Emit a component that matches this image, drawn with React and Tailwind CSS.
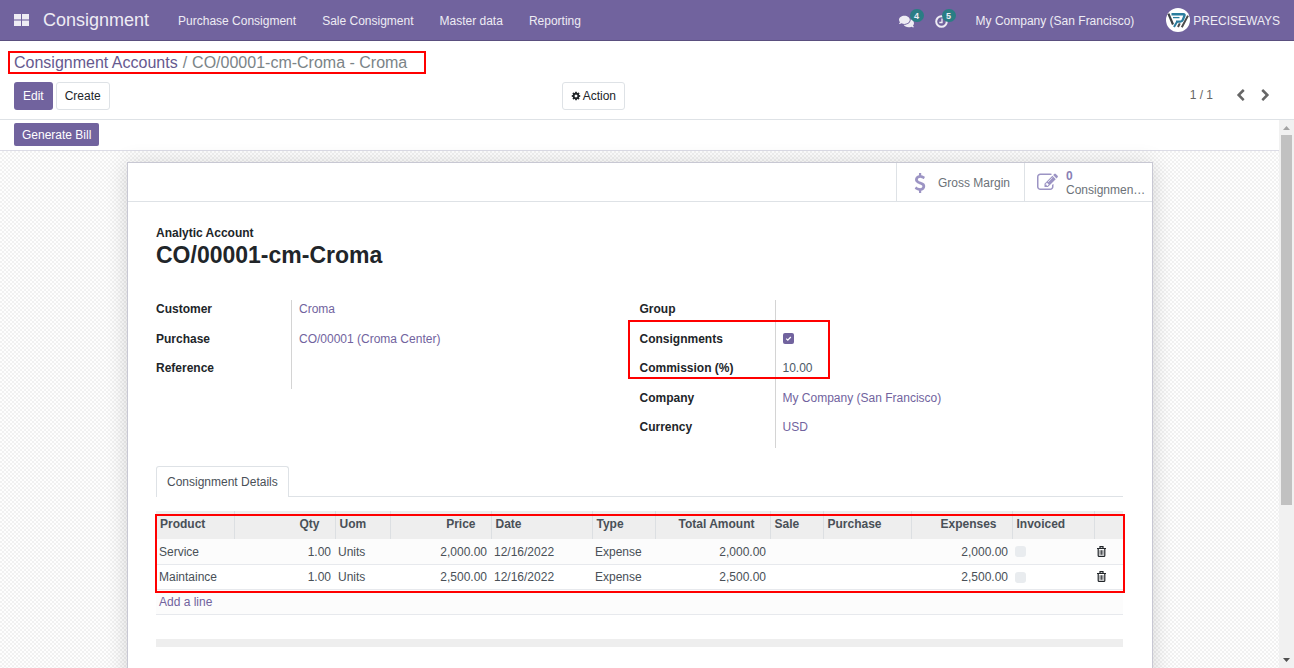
import React from "react";
import { FaComments } from "react-icons/fa";

const MENUS = ["Purchase Consigment", "Sale Consigment", "Master data", "Reporting"];

const LEFT_FIELDS = [
  { label: "Customer", link: "Croma" },
  { label: "Purchase", link: "CO/00001 (Croma Center)" },
  { label: "Reference" },
];

const RIGHT_FIELDS = [
  { label: "Group" },
  { label: "Consignments", checked: true },
  { label: "Commission (%)", text: "10.00" },
  { label: "Company", link: "My Company (San Francisco)" },
  { label: "Currency", link: "USD" },
];

const COLUMNS = [
  { title: "Product", width: "w-[78px]" },
  { title: "Qty", width: "w-[101px]", numeric: true },
  { title: "Uom", width: "w-[55px]" },
  { title: "Price", width: "w-[101px]", numeric: true },
  { title: "Date", width: "w-[101px]" },
  { title: "Type", width: "w-[63px]" },
  { title: "Total Amount", width: "w-[115px]", numeric: true },
  { title: "Sale", width: "w-[53px]" },
  { title: "Purchase", width: "w-[88px]" },
  { title: "Expenses", width: "w-[101px]", numeric: true },
  { title: "Invoiced", width: "w-[82px]" },
];

const LINES = [
  ["Service", "1.00", "Units", "2,000.00", "12/16/2022", "Expense", "2,000.00", "", "", "2,000.00"],
  ["Maintaince", "1.00", "Units", "2,500.00", "12/16/2022", "Expense", "2,500.00", "", "", "2,500.00"],
];

const COG =
  "M1152 896q0-106-75-181t-181-75-181 75-75 181 75 181 181 75 181-75 75-181zm512-109v222q0 12-8 23t-20 13l-185 28q-19 54-39 91 35 50 107 138 10 12 10 25t-9 23q-27 37-99 108t-94 71q-12 0-26-9l-138-108q-44 23-91 38-16 136-29 186-7 28-36 28h-222q-14 0-24.500-8.500t-11.500-21.500l-28-184q-49-16-90-37l-141 107q-10 9-25 9-14 0-25-11-126-114-165-168-7-10-7-23 0-12 8-23 15-21 51-66.500t54-70.500q-27-50-41-99l-183-27q-13-2-21-12.500t-8-23.500v-222q0-12 8-23t19-13l186-28q14-46 39-92-40-57-107-138-10-12-10-24 0-10 9-23 26-36 98.500-107.500t94.500-71.500q13 0 26 10l138 107q44-23 91-38 16-136 29-186 7-28 36-28h222q14 0 24.500 8.500t11.500 21.500l28 184q49 16 90 37l142-107q9-9 24-9 13 0 25 10 129 119 165 170 7 8 7 22 0 12-8 23-15 21-51 66.500t-54 70.500q26 50 41 98l183 28q13 2 21 12.500t8 23.500z";
const CHEVRON_LEFT =
  "M1427 301l-531 531 531 531q19 19 19 45t-19 45l-166 166q-19 19-45 19t-45-19l-742-742q-19-19-19-45t19-45l742-742q19-19 45-19t45 19l166 166q19 19 19 45t-19 45z";
const CHEVRON_RIGHT =
  "M1363 877l-742 742q-19 19-45 19t-45-19l-166-166q-19-19-19-45t19-45l531-531-531-531q-19-19-19-45t19-45l166-166q19-19 45-19t45 19l742 742q19 19 19 45t-19 45z";
const PENCIL_SQUARE =
  "M888 1184l116-116-152-152-116 116v56h96v96h56zm440-720q-16-16-33 1l-350 350q-17 17-1 33t33-1l350-350q17-17 1-33zm80 594v190q0 119-84.500 203.500t-203.500 84.500h-832q-119 0-203.500-84.500t-84.500-203.500v-832q0-119 84.500-203.500t203.500-84.500h832q63 0 117 25 15 7 18 23 3 17-9 29l-49 49q-14 14-32 8-23-6-45-6h-832q-66 0-113 47t-47 113v832q0 66 47 113t113 47h832q66 0 113-47t47-113v-126q0-13 9-22l64-64q15-15 35-7t20 29zm-96-738l288 288-672 672h-288v-288zm444 132l-92 92-288-288 92-92q28-28 68-28t68 28l152 152q28 28 28 68t-28 68z";
const DOLLAR =
  "M978 1185q0 153-99.500 263.500t-258.500 136.500v175q0 14-9 23t-23 9h-135q-13 0-22.500-9.500t-9.500-22.500v-175q-66-9-127.500-31t-101.500-44.500-74-48-46.500-37.500-17.500-18q-17-21-2-41l103-135q7-10 23-12 15-2 24 9l2 2q113 99 243 125 37 8 74 8 81 0 142.500-43t61.500-122q0-28-15-53t-33.500-42-58.500-37.500-66-32-80-32.500q-39-16-61.500-25t-61.500-26.500-62.500-31-56.500-35.500-53.500-42.500-43.500-49-35.500-58-21-66.500-8.500-78q0-138 98-242t255-134v-180q0-13 9.500-22.500t22.500-9.500h135q14 0 23 9t9 23v176q57 6 110.500 23t87 33.500 63.500 37.500 39 29 15 14q17 18 5 38l-81 146q-8 15-23 16-14 3-27-7-3-3-14.500-12t-39-26.500-58.500-32-74.500-26-85.500-11.500q-95 0-155 43t-60 111q0 26 8.500 48t29.500 41.500 39.500 33 56 31 60.500 27 70 27.500q53 20 81 31.500t76 35 75.500 42.500 62 50 53 63.500 31.500 76.500 13 94z";

function Glyph({ path, size, box = "0 0 1792 1792", className = "" }) {
  return (
    <svg width={size} height={size} viewBox={box} fill="currentColor" className={`shrink-0 ${className}`} aria-hidden="true">
      <path d={path} />
    </svg>
  );
}

function AppsIcon() {
  return (
    <svg width="15" height="12" viewBox="0 0 15 12" fill="currentColor" aria-hidden="true">
      <path d="M0 0h7v5H0zM8 0h7v5H8zM0 7h7v5H0zM8 7h7v5H8z" />
      <path d="M0 5h7v2H0zM8 5h7v2H8z" opacity=".45" />
    </svg>
  );
}

function ClockIcon() {
  return (
    <svg width="13" height="13" viewBox="0 0 13 13" fill="none" stroke="currentColor" aria-hidden="true">
      <circle cx="6.500" cy="6.500" r="5.300" strokeWidth="2" />
      <path d="M7 3.500v4H4.300" strokeWidth="1.300" />
    </svg>
  );
}

function TrashIcon() {
  return (
    <svg width="9" height="11" viewBox="0 0 9 11" fill="none" stroke="currentColor" aria-hidden="true">
      <path d="M0 2.500h9M3 2V.7h3V2" strokeWidth="1.200" />
      <path d="M1.200 2.500v7q0 .9.9.9h4.800q.9 0 .9-.9v-7" strokeWidth="1.200" />
      <path d="M3.100 4.200v4.600M4.500 4.200v4.600M5.900 4.200v4.600" strokeWidth=".8" />
    </svg>
  );
}

function Avatar() {
  return (
    <svg width="24" height="24" viewBox="0 0 24 24" className="shrink-0" aria-hidden="true">
      <circle cx="12" cy="12" r="12" fill="#fff" />
      <g fill="none">
        <path d="M5.500 6.200h11.800q1.800 0 1.100 1.700l-1.600 4q-.7 1.700-2.500 1.700H10" stroke="#2b7d9e" strokeWidth="2.400" />
        <path d="M7 9.600h6.500" stroke="#2b7d9e" strokeWidth="1.300" />
        <path d="M11.200 13.500 8 19" stroke="#2b7d9e" strokeWidth="2" />
        <path d="M2.400 5.600 7 16.500" stroke="#3b4045" strokeWidth="2.200" />
        <path d="M12 19l1.800-3.600M15.800 19.200 22 7.600" stroke="#4b4b4b" strokeWidth="2" />
      </g>
    </svg>
  );
}

function Highlight({ className }) {
  return <span aria-hidden="true" className={`pointer-events-none absolute border-2 border-[#ff0000] ${className}`} />;
}

function SystrayButton({ label, count, badgeLeft, children }) {
  return (
    <button type="button" aria-label={label} className="relative flex h-10 items-center pt-[2px]">
      {children}
      <span
        className={`absolute top-[9px] flex h-[13px] w-[14px] items-center justify-center rounded-full bg-[#2a7d84] text-[9px] font-bold ${badgeLeft}`}
      >
        {count}
      </span>
    </button>
  );
}

function Navbar() {
  return (
    <header className="flex h-[41px] shrink-0 items-center justify-between border-b border-[#5a4f7f] bg-[#71639e] px-[14px] text-[#eeecf4]">
      <nav className="flex items-center">
        <button type="button" aria-label="Home menu">
          <AppsIcon />
        </button>
        <a href="#consignment" className="ml-[14px] text-lg leading-6">Consignment</a>
        <div className="ml-[29px] flex gap-[26px] pt-px">
          {MENUS.map((menu) => (
            <a key={menu} href="#menu">{menu}</a>
          ))}
        </div>
      </nav>
      <div className="flex items-center">
        <SystrayButton label="Conversations" count="4" badgeLeft="left-[11px]">
          <FaComments size={15} />
        </SystrayButton>
        <span className="w-[21px]" />
        <SystrayButton label="Activities" count="5" badgeLeft="left-[7px]">
          <ClockIcon />
        </SystrayButton>
        <button type="button" className="ml-7 pt-px">My Company (San Francisco)</button>
        <button type="button" className="ml-8 flex items-center gap-[3px]">
          <Avatar />
          <span className="pt-px">PRECISEWAYS</span>
        </button>
      </div>
    </header>
  );
}

function ControlPanel() {
  return (
    <div className="flex h-[79px] shrink-0 flex-col border-b border-[#dee2e6] px-[14px] pt-[10px]">
      <div className="flex">
        <div className="relative pr-[19px] text-base leading-[23px] text-[#7b8487]">
          <a href="#accounts" className="text-[#66598f]">Consignment Accounts</a>
          <span className="px-[5px]">/</span>
          <span>CO/00001-cm-Croma - Croma</span>
          <Highlight className="inset-y-0 right-0 -left-[6px]" />
        </div>
      </div>
      <div className="mt-2 flex items-center">
        <div className="flex w-1/2 justify-between pr-[22px]">
          <div className="flex gap-[3px]">
            <button type="button" className="h-7 rounded-[3px] bg-[#71639e] px-[9px] text-white">Edit</button>
            <button type="button" className="h-7 rounded-[3px] border border-[#dee2e6] px-2 text-[#212529]">Create</button>
          </div>
          <button type="button" className="flex h-7 items-center gap-[2px] rounded-[3px] border border-[#dee2e6] px-2 text-[#212529]">
            <Glyph path={COG} size={10} />
            Action
          </button>
        </div>
        <div className="flex w-1/2 items-center justify-end pr-2 pb-[2px] text-[#666666]">
          <span className="mr-[21px]">1 / 1</span>
          <button type="button" aria-label="Previous" className="mr-3"><Glyph path={CHEVRON_LEFT} size={13} /></button>
          <button type="button" aria-label="Next"><Glyph path={CHEVRON_RIGHT} size={13} /></button>
        </div>
      </div>
    </div>
  );
}

function FieldGroup({ fields, className, children }) {
  return (
    <dl className={`relative grid ${className}`}>
      {fields.map((field) => (
        <div key={field.label} className="flex">
          <dt className="w-[135px] leading-[18px] font-bold text-[#212529]">
            {field.checked ? <label htmlFor="consignments">{field.label}</label> : field.label}
          </dt>
          <dd className="flex-1 border-l border-[#d4d4d4] pl-[7px] leading-[18px] text-[#4c5a67]">
            {field.link && <a href="#record" className="text-[#71639e]">{field.link}</a>}
            {field.text}
            {field.checked && (
              <span className="relative mt-[3px] block size-[11px]">
                <input
                  id="consignments"
                  type="checkbox"
                  defaultChecked
                  disabled
                  className="block size-[11px] appearance-none rounded-[2px] bg-[#71639e]"
                />
                <svg viewBox="0 0 11 11" className="pointer-events-none absolute inset-0" fill="none" stroke="#fff" strokeWidth="1.300" aria-hidden="true">
                  <path d="M3.200 5.600 4.800 7.100 7.800 4" />
                </svg>
              </span>
            )}
          </dd>
        </div>
      ))}
      {children}
    </dl>
  );
}

function StatButtons() {
  return (
    <div className="flex h-[39px] justify-end border-b border-[#dee2e6] text-[#6c7278]">
      <button type="button" className="flex w-32 items-center border-l border-[#dee2e6] pt-px pl-[13px]">
        <Glyph path={DOLLAR} size={20} box="-384 0 1792 1792" className="mr-2 text-[#9c94c4]" />
        <span>Gross Margin</span>
      </button>
      <button type="button" className="flex w-32 items-center border-l border-[#dee2e6] pt-[2px] pl-3 text-left">
        <Glyph path={PENCIL_SQUARE} size={21} className="mr-2 mb-[2px] text-[#9c94c4]" />
        <span className="leading-[14px]">
          <span className="block font-bold text-[#8a7fb5]">0</span>
          <span className="block">Consignmen…</span>
        </span>
      </button>
    </div>
  );
}

function LinesTable() {
  return (
    <div className="relative">
      <table className="w-full table-fixed border-collapse">
        <thead>
          <tr className="h-7 bg-[#eeeeee] text-[#495057]">
            {COLUMNS.map((col) => (
              <th
                key={col.title}
                scope="col"
                className={`border-r border-[#dcdfe2] p-0 pb-[2px] whitespace-nowrap ${col.width} ${
                  col.numeric ? "pr-[15px] text-right" : "pl-1 text-left"
                }`}
              >
                {col.title}
              </th>
            ))}
            <th aria-label="Delete" className="p-0" />
          </tr>
        </thead>
        <tbody className="text-[#495057]">
          {LINES.map((line) => (
            <tr key={line[0]} className="h-[25px] border-b border-[#e7e9ed] odd:bg-[#fcfcfc]">
              {line.map((value, i) => (
                <td key={COLUMNS[i].title} className={`p-0 pt-px whitespace-nowrap ${COLUMNS[i].numeric ? "pr-1 text-right" : "pl-[3px]"}`}>
                  {value}
                </td>
              ))}
              <td className="p-0 pt-px pl-[3px]">
                <input
                  type="checkbox"
                  disabled
                  aria-label={`${line[0]} invoiced`}
                  className="block size-[11px] appearance-none rounded-[3px] bg-[#e9ecef]"
                />
              </td>
              <td className="p-0 pl-[3px] text-[#212529]">
                <button type="button" aria-label={`Delete ${line[0]}`} className="block">
                  <TrashIcon />
                </button>
              </td>
            </tr>
          ))}
          <tr className="h-[25px] border-b border-[#e7e9ed] bg-[#fcfcfc]">
            <td colSpan={12} className="p-0 pl-[3px]">
              <a href="#add" className="text-[#71639e]">Add a line</a>
            </td>
          </tr>
        </tbody>
      </table>
      <Highlight className="top-[3px] -right-[2px] bottom-[22px] -left-px" />
    </div>
  );
}

function Sheet() {
  return (
    <div className="min-h-[620px] border border-[#c8c8d3] bg-white shadow-[0_2px_20px_rgba(0,0,0,0.16)]">
      <StatButtons />
      <div className="pt-[22px] pr-[29px] pl-7">
        <p className="leading-[18px] font-bold text-[#212529]">Analytic Account</p>
        <h1 className="text-[23px] leading-[26px] font-bold text-[#212529]">CO/00001-cm-Croma</h1>
        <div className="mt-8 grid grid-cols-2 items-start">
          <FieldGroup fields={LEFT_FIELDS} className="h-[89px] grid-rows-3" />
          <FieldGroup fields={RIGHT_FIELDS} className="h-[148px] grid-rows-5">
            <Highlight className="top-5 -left-3 h-[59px] w-[202px]" />
          </FieldGroup>
        </div>
        <div role="tablist" className="mt-[18px] flex border-b border-[#dee2e6]">
          <button
            type="button"
            role="tab"
            aria-selected="true"
            className="-mb-px h-[31px] rounded-t-[3px] border border-b-0 border-[#dee2e6] bg-white px-[10px] text-[#495057]"
          >
            Consignment Details
          </button>
        </div>
        <div className="pt-[14px]">
          <LinesTable />
          <div className="mt-6 h-2 bg-[#eeeeee]" />
        </div>
      </div>
    </div>
  );
}

function ScrollTrack() {
  return (
    <div aria-hidden="true" className="flex w-[15px] shrink-0 flex-col items-center justify-between bg-[#f1f1f1]">
      <svg width="15" height="15" viewBox="0 0 15 15" className="shrink-0"><path d="M4 10h7L7.500 6z" fill="#a3a3a3" /></svg>
      <div className="w-full flex-1 px-[2px]">
        <div className="h-[71.500%] bg-[#c1c1c1]" />
      </div>
      <svg width="15" height="15" viewBox="0 0 15 15" className="shrink-0"><path d="M4 5h7L7.500 9z" fill="#505050" /></svg>
    </div>
  );
}

export default function App() {
  return (
    <div className="flex h-screen flex-col overflow-hidden bg-white font-['Liberation_Sans',Arial,sans-serif] text-xs">
      <Navbar />
      <ControlPanel />
      <div className="flex min-h-0 flex-1">
        <main className="flex min-w-0 flex-1 flex-col overflow-y-auto [scrollbar-width:none]">
          <div className="h-[31px] shrink-0 border-b border-[#dcdce6] bg-white px-[14px] pt-[3px]">
            <button type="button" className="h-[23px] rounded-[2px] bg-[#71639e] px-2 text-white">Generate Bill</button>
          </div>
          <div className="bg-[conic-gradient(#f1f1f1_25%,#fefefe_0_50%,#f1f1f1_0_75%,#fefefe_0)] bg-size-[4px_4px] pt-[11px] pr-[126px] pb-4 pl-[127px]">
            <Sheet />
          </div>
        </main>
        <ScrollTrack />
      </div>
    </div>
  );
}
